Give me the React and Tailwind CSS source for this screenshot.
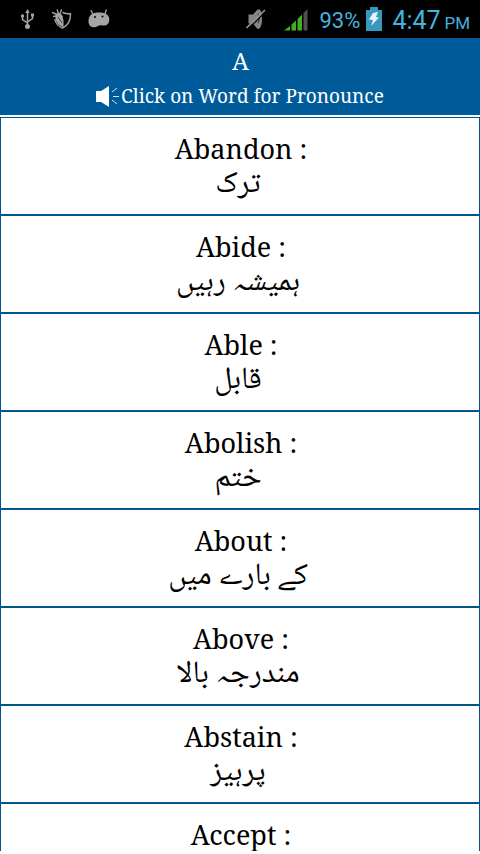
const WORDS = [
  { en: "Abandon", ur: "ترک" },
  { en: "Abide", ur: "ہمیشہ رہیں" },
  { en: "Able", ur: "قابل" },
  { en: "Abolish", ur: "ختم" },
  { en: "About", ur: "کے بارے میں" },
  { en: "Above", ur: "مندرجہ بالا" },
  { en: "Abstain", ur: "پرہیز" },
  { en: "Accept", ur: "قبول" },
];

const SERIF = "font-['Noto_Serif','Droid_Serif','DejaVu_Serif',serif]";

function UsbIcon() {
  return (
    <svg className="h-5 w-4" viewBox="0 0 16 20" fill="none" stroke="#a5a5a5" strokeWidth="1.5">
      <path d="M7.500 2v15M2.500 7v3.500l5 3.500M12.500 7v2.500l-5 3.500" />
      <path d="M5.300 4 7.500 0l2.200 4z" fill="#a5a5a5" stroke="none" />
      <circle cx="7.500" cy="17.500" r="2.500" fill="#a5a5a5" stroke="none" />
      <circle cx="2.500" cy="7" r="1.700" fill="#a5a5a5" stroke="none" />
      <path d="M11 4.500h3v3h-3z" fill="#a5a5a5" stroke="none" />
    </svg>
  );
}

function ShieldIcon() {
  return (
    <svg className="h-5 w-5" viewBox="0 0 20 20" fill="none" stroke="#a5a5a5" strokeWidth="1.400">
      <path d="M10.500 3.500c3 1.200 5 1.600 8 1.200.2 6-1.800 11.300-8 14.300C6 17 3.500 14 2.800 10" />
      <path d="M3.500 5C5 3.500 8 3.500 9 5.500c1.500 2 2.500 4 2.500 7V18C8 17 4.500 14 3.500 10z" fill="#a5a5a5" stroke="none" />
      <path d="m6 8 4 6" stroke="#222" strokeWidth=".8" />
      <path d="m0 3.500 4 1.500M5 .5l1.500 4M9.500 .5 8 5l2.500 3M1 7.500 4.500 7" />
    </svg>
  );
}

function AndroidIcon() {
  return (
    <svg className="h-5 w-[22px]" viewBox="0 0 22 20" fill="#a5a5a5">
      <path d="M11 3.500c6.500 0 10.300 2.200 10.300 7 0 4-2.300 6-5.300 6-1.500 0-2.500-.5-4-.3-2 .3-3 2-6 2-3.500 0-5.500-2.200-5.500-6C.500 6 4.500 3.500 11 3.500z" />
      <path d="m2.800 1 2.400 5M18.500.5l-1.800 5" stroke="#a5a5a5" strokeWidth="1.300" />
      <circle cx="7" cy="8" r="1" fill="#000" />
      <circle cx="14.500" cy="7.500" r="1" fill="#000" />
    </svg>
  );
}

function MutedIcon() {
  return (
    <svg className="h-[22px] w-5" viewBox="0 0 20 22">
      <path d="M2.500 6.500H7L11 2c3.500-2.500 5 2 5 8.500s-1.500 12-5 10L7 15.500H2.500z" fill="#858585" />
      <path d="M12 6c1.500 2 1.500 7 0 9" fill="none" stroke="#333" strokeWidth="1.200" />
      <path d="M1.500 21.500 20 3.500" stroke="#000" strokeWidth="1.200" />
      <path d="M.5 20 19 2" stroke="#909090" strokeWidth="1.700" />
    </svg>
  );
}

function SignalIcon() {
  return (
    <svg className="h-[23px] w-6" viewBox="0 0 24 23" fill="#46ad22">
      <path d="M0 22.500 6 18v4.500zM7.500 16.500l4.500-4v10H7.500zM13.500 11l4.500-4.500v16h-4.500z" />
      <path d="m19.500 5 4-4v21.500h-4z" fill="#505050" />
    </svg>
  );
}

function BatteryIcon() {
  return (
    <svg className="h-6 w-4" viewBox="0 0 16 24">
      <path d="M4 0h8v3h4v21H0V3h4z" fill="#3998bd" />
      <path d="m7 6 5-1-2 5 3 .5L5 19l2-6-4-.5z" fill="#e4f5fc" />
    </svg>
  );
}

function StatusBar() {
  return (
    <div className="flex h-[38px] items-center bg-black font-[Roboto,sans-serif] text-[#42b4df]">
      <div className="ml-5 flex items-center">
        <UsbIcon />
        <span className="ml-4">
          <ShieldIcon />
        </span>
        <span className="ml-4">
          <AndroidIcon />
        </span>
      </div>
      <div className="ml-auto flex items-center pr-2.5">
        <MutedIcon />
        <span className="ml-[18px]">
          <SignalIcon />
        </span>
        <span className="ml-[11px] w-10 pt-[3px] text-[22px] whitespace-nowrap">93%</span>
        <span className="ml-[7px]">
          <BatteryIcon />
        </span>
        <div className="ml-2.5 flex items-baseline pt-[3px] whitespace-nowrap">
          <span className="w-[47px] text-[25px]">4:47</span>
          <span className="ml-[5px] text-[17px]">PM</span>
        </div>
      </div>
    </div>
  );
}

function SpeakerIcon() {
  return (
    <svg className="h-[22px] w-6" viewBox="0 0 24 22">
      <path d="M0 6h5l8-5v21l-8-5H0z" fill="#fff" />
      <path d="m16 7 5-4M17 11.500h6M16 15l5 4" stroke="#cce8f5" strokeWidth="1" />
    </svg>
  );
}

function Header() {
  return (
    <header className={`flex h-[77px] flex-col items-center bg-[#005b9b] text-white ${SERIF}`}>
      <h1 className="mt-[7px] pl-px text-2xl leading-8">A</h1>
      <div className="mt-[7px] flex items-center">
        <SpeakerIcon />
        <span className="ml-px pt-px text-[19px] leading-[22px] whitespace-nowrap">
          Click on Word for Pronounce
        </span>
      </div>
    </header>
  );
}

function WordRow({ en, ur }) {
  return (
    <li className="flex h-[98px] shrink-0 flex-col items-center border border-[#00568c] text-black">
      <span className={`mt-[11px] h-[41px] pl-0.5 text-[27px] leading-10 ${SERIF}`}>{en} :</span>
      <span
        dir="rtl"
        lang="ur"
        className="h-8 pr-1 text-[31px] leading-8 font-['Noto_Naskh_Arabic','Noto_Sans_Arabic','DejaVu_Sans',sans-serif]"
      >
        {ur}
      </span>
    </li>
  );
}

export default function App() {
  return (
    <div className="h-[854px] w-[480px] bg-white">
      <div className="flex h-[851px] flex-col overflow-hidden">
        <StatusBar />
        <Header />
        <ul className="mt-0.5 flex min-h-0 flex-1 flex-col overflow-hidden">
          {WORDS.map((word) => (
            <WordRow key={word.en} en={word.en} ur={word.ur} />
          ))}
        </ul>
      </div>
    </div>
  );
}
